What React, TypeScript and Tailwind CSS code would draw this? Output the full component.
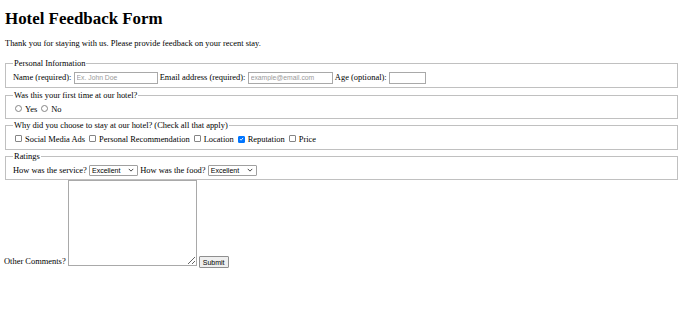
import React from "react";

function Box({checked = false}: {checked?: boolean}) {
    return (
        <span
            className={
                "inline-flex h-[7px] w-[7px] shrink-0 items-center justify-center rounded-[1px] border " +
                (checked ? "border-[#0075ff] bg-[#0075ff]" : "border-[#858585] bg-white")
            }
        >
            {checked && (
                <svg width="6" height="6" viewBox="0 0 10 10">
                    <path d="M2 5.2 L4.2 7.4 L8.2 2.8" fill="none" stroke="white" strokeWidth="1.8"/>
                </svg>
            )}
        </span>
    );
}

function Radio() {
    return <span className="inline-block h-[7px] w-[7px] shrink-0 rounded-full border border-[#858585] bg-white"/>;
}

function Select() {
    return (
        <span className="inline-flex h-[11px] w-[49px] items-center justify-between rounded-[1px] border border-[#a0a0a0] bg-white pl-[2px] pr-[3px] font-['Liberation_Sans',sans-serif] text-[7px] leading-none">
            <span>Excellent</span>
            <svg width="6" height="4" viewBox="0 0 8 5">
                <path d="M1 1 L4 4 L7 1" fill="none" stroke="#333" strokeWidth="1.2"/>
            </svg>
        </span>
    );
}

const fieldsetCls = "border border-[#c0c0c0] px-[7px] pt-[1.5px] pb-[2px]";
const legendCls = "px-[1px] leading-[11px]";
const inputCls =
    "h-[12px] border border-[#a9a9a9] bg-white px-[2px] font-['Liberation_Sans',sans-serif] text-[6.8px] leading-none placeholder:text-[#9a9a9a] outline-none";

export default function App() {
    const reasons = [
        {label: "Social Media Ads", checked: false},
        {label: "Personal Recommendation", checked: false},
        {label: "Location", checked: false},
        {label: "Reputation", checked: true},
        {label: "Price", checked: false},
    ];

    return (
        <div className="min-h-screen bg-white pl-[5px] pr-[2px] font-['Liberation_Serif',serif] text-[8.45px] text-black">
            <h1 className="pt-[9px] text-[16.9px] font-bold leading-[20px]">Hotel Feedback Form</h1>
            <p className="mt-[9px] leading-[10px]">Thank you for staying with us. Please provide feedback on your recent stay.</p>

            <form className="mt-[10px]">
                <fieldset className={fieldsetCls}>
                    <legend className={legendCls}>Personal Information</legend>
                    <div className="flex h-[14px] items-center gap-[2.2px]">
                        <span>Name (required):</span>
                        <input className={inputCls + " w-[84px]"} placeholder="Ex. John Doe"/>
                        <span>Email address (required):</span>
                        <input className={inputCls + " w-[85px]"} placeholder="example@email.com"/>
                        <span>Age (optional):</span>
                        <input className={inputCls + " w-[37px]"}/>
                    </div>
                </fieldset>

                <fieldset className={fieldsetCls + " mt-[2px]"}>
                    <legend className={legendCls}>Was this your first time at our hotel?</legend>
                    <div className="flex h-[14px] items-center">
                        <span className="ml-[2px] mr-[3px]"><Radio/></span>
                        <span>Yes</span>
                        <span className="ml-[4px] mr-[3px]"><Radio/></span>
                        <span>No</span>
                    </div>
                </fieldset>

                <fieldset className={fieldsetCls + " mt-[1px]"}>
                    <legend className={legendCls}>Why did you choose to stay at our hotel? (Check all that apply)</legend>
                    <div className="flex h-[14px] items-center">
                        {reasons.map((r, i) => (
                            <React.Fragment key={r.label}>
                                <span className={(i === 0 ? "ml-[2px]" : "ml-[4px]") + " mr-[3px]"}><Box checked={r.checked}/></span>
                                <span>{r.label}</span>
                            </React.Fragment>
                        ))}
                    </div>
                </fieldset>

                <fieldset className={fieldsetCls + " mt-[1px]"}>
                    <legend className={legendCls}>Ratings</legend>
                    <div className="flex h-[14px] items-center gap-[2.2px]">
                        <span>How was the service?</span>
                        <Select/>
                        <span>How was the food?</span>
                        <Select/>
                    </div>
                </fieldset>

                <div className="flex items-end gap-[2px]">
                    <span className="-ml-[1px] leading-[10px]">Other Comments?</span>
                    <textarea className="h-[86px] w-[129px] resize border border-[#a9a9a9] bg-white outline-none"/>
                    <button
                        type="button"
                        className="-mb-[2px] h-[12px] w-[30px] rounded-[1px] border border-[#8f8f8f] bg-[#efefef] font-['Liberation_Sans',sans-serif] text-[7px] leading-none"
                    >
                        Submit
                    </button>
                </div>
            </form>
        </div>
    );
}
